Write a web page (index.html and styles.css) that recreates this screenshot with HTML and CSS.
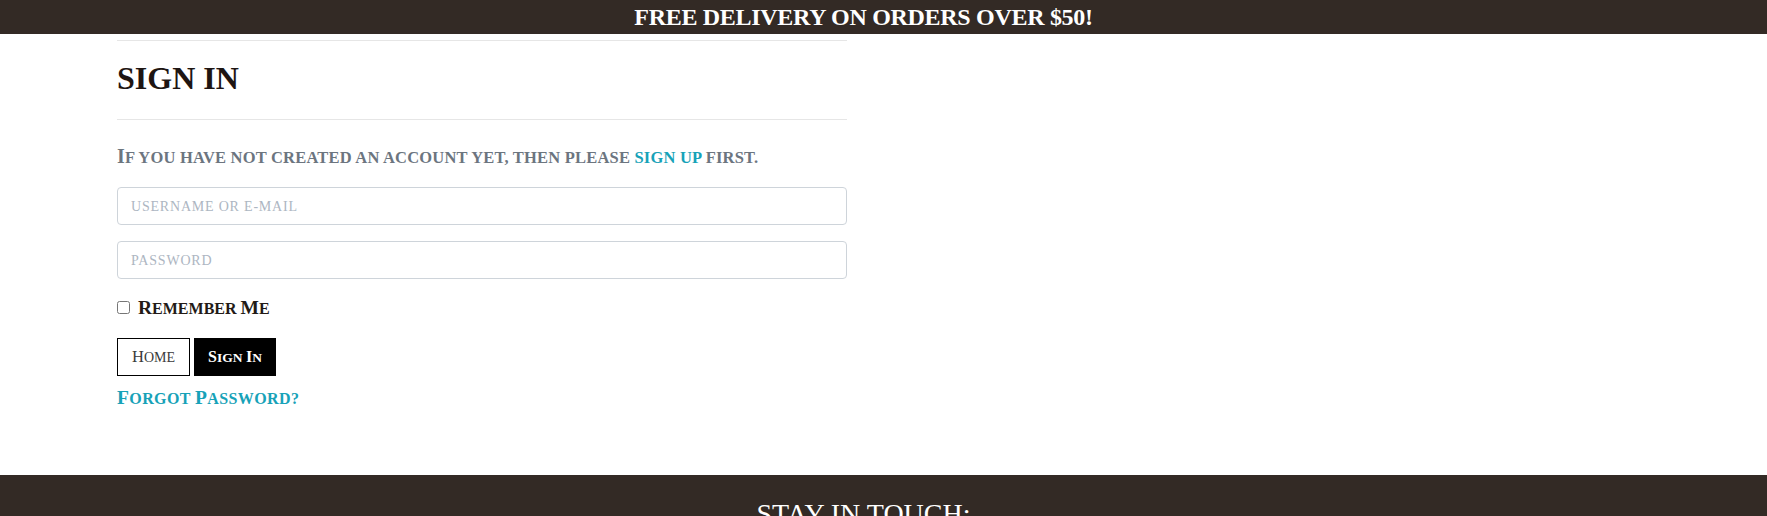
FILE: index.html
```html
<!DOCTYPE html>
<html lang="en">
<head>
<meta charset="utf-8">
<title>Sign In</title>
<link rel="stylesheet" href="styles.css">
</head>
<body>
<div class="banner">FREE DELIVERY ON ORDERS OVER $50!</div>
<main class="page">
  <div class="panel">
    <div class="rule rule-top"></div>
    <h1 class="title">SIGN IN</h1>
    <div class="rule rule-mid"></div>
    <p class="intro"><span class="cap">I</span>f you have not created an account yet, then please <a class="link" href="#">sign up</a> first.</p>
    <form class="form">
      <input class="field" type="text" placeholder="Username or e-mail">
      <input class="field" type="password" placeholder="Password">
      <label class="remember"><input class="check" type="checkbox"><span><span class="cap">R</span>emember <span class="cap">M</span>e</span></label>
      <div class="actions">
        <a class="btn btn-outline" href="#"><span><span class="cap">H</span>ome</span></a>
        <button class="btn btn-dark" type="button"><span><span class="cap">S</span>ign <span class="cap">I</span>n</span></button>
      </div>
      <a class="forgot" href="#"><span class="cap">F</span>orgot <span class="cap">P</span>assword?</a>
    </form>
  </div>
</main>
<footer class="footer">
  <h2 class="footer-title">STAY IN TOUCH:</h2>
</footer>
</body>
</html>
```

FILE: styles.css
```css
* { box-sizing: border-box; }
html, body { margin: 0; padding: 0; }
body {
  font-family: "Liberation Serif", "DejaVu Serif", serif;
  color: #231a16;
  background: #fff;
}
.cap { line-height: 1; }
.banner {
  height: 34px;
  line-height: 34px;
  background: #332a25;
  color: #fff;
  font-size: 24px;
  font-weight: bold;
  letter-spacing: -0.3px;
  text-align: center;
  padding-right: 40px;
}
.page {
  padding: 0 0 64px 117px;
}
.panel {
  width: 730px;
}
.rule {
  border-top: 1px solid #e6e6e6;
}
.rule-top { margin-top: 6px; }
.title {
  margin: 18px 0 0;
  font-size: 32px;
  line-height: 38px;
  font-weight: bold;
  color: #1e1512;
}
.rule-mid { margin-top: 22px; }
.intro {
  margin: 26px 0 0;
  height: 24px;
  font-size: 16.5px;
  line-height: 24px;
  letter-spacing: 0.2px;
  font-weight: bold;
  text-transform: uppercase;
  color: #6c757f;
}
.intro .cap { font-size: 20px; }
.link {
  color: #17a2b8;
  text-decoration: none;
}
.form {
  display: flex;
  flex-direction: column;
  align-items: flex-start;
  margin-top: 17px;
}
.field {
  width: 100%;
  height: 38px;
  border: 1px solid #ced4da;
  border-radius: 4px;
  padding: 1px 13px 0;
  margin: 0 0 16px;
  font-family: inherit;
  font-size: 14px;
  letter-spacing: 0.8px;
  text-transform: uppercase;
  color: #495057;
}
.field::placeholder {
  color: #adb6c2;
  text-transform: uppercase;
}
.remember {
  display: flex;
  align-items: flex-start;
  height: 24px;
  margin-top: 2px;
  font-size: 16px;
  line-height: 24px;
  font-weight: bold;
  text-transform: uppercase;
  color: #231a16;
}
.remember .cap { font-size: 19.5px; }
.check {
  width: 13px;
  height: 13px;
  margin: 4px 8px 0 0;
}
.actions {
  display: flex;
  gap: 4px;
  margin-top: 17px;
}
.btn {
  display: flex;
  align-items: center;
  justify-content: center;
  height: 38px;
  padding: 0;
  font-family: inherit;
  font-size: 14px;
  text-transform: uppercase;
  text-decoration: none;
  border: 1px solid #000;
  cursor: pointer;
}
.btn .cap { font-size: 16.5px; }
.btn-outline {
  width: 73px;
  background: #fff;
  color: #3a3a3a;
}
.btn-dark {
  width: 82px;
  background: #000;
  color: #fff;
  font-weight: bold;
  font-size: 13.5px;
}
.btn-dark .cap { font-size: 16px; }
.forgot {
  margin-top: 11px;
  height: 24px;
  font-size: 16px;
  line-height: 24px;
  letter-spacing: 0.4px;
  font-weight: bold;
  text-transform: uppercase;
  color: #17a2b8;
  text-decoration: none;
}
.forgot .cap { font-size: 19.5px; }
.footer {
  background: #332a25;
  color: #fff;
  padding: 22px 40px 40px 0;
  text-align: center;
}
.footer-title {
  margin: 0;
  font-size: 28px;
  line-height: 34px;
  font-weight: normal;
}
```
